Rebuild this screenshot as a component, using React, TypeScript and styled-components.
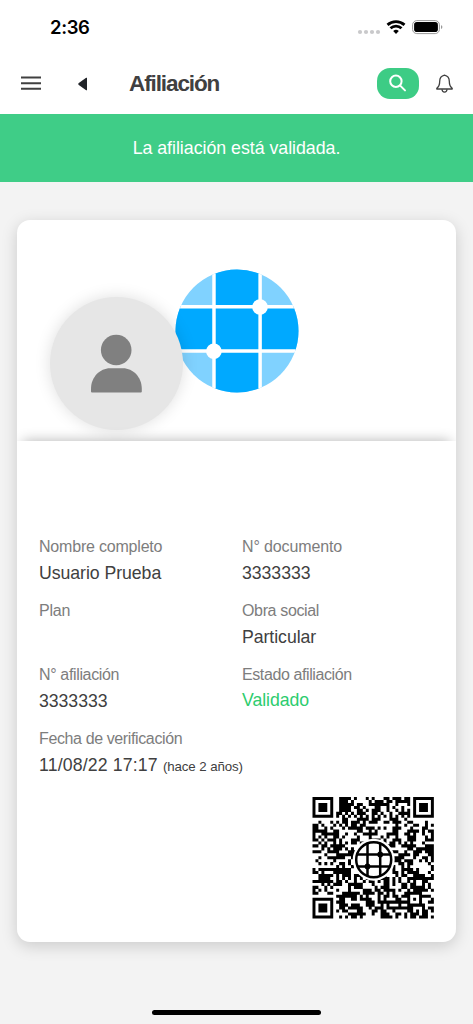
import React from 'react';
import styled, { createGlobalStyle } from 'styled-components';

const GlobalStyle = createGlobalStyle`
  * { box-sizing: border-box; }
  body {
    margin: 0;
    background: #f3f3f3;
    font-family: "Liberation Sans", Arial, sans-serif;
    color: #404040;
  }
`;

const Screen = styled.div`
  display: flex;
  flex-direction: column;
  width: 100%;
  height: 1024px;
  overflow: hidden;
  background: #f3f3f3;
`;

const StatusBar = styled.div`
  display: flex;
  align-items: center;
  justify-content: space-between;
  height: 54px;
  padding: 0 30px 0 50px;
  background: #fff;
`;

const Clock = styled.span`
  font: 600 18.5px/24px Inter, sans-serif;
  letter-spacing: -0.4px;
  color: #000;
`;

const StatusIcons = styled.svg`
  display: block;
  width: 86px;
  height: 20px;
`;

const TopBar = styled.header`
  display: flex;
  align-items: center;
  height: 60px;
  padding: 0 20.5px 0 21px;
  background: #fff;
`;

const MenuIcon = styled.svg`
  width: 20px;
  height: 16px;
  margin-bottom: 2px;
`;

const BackIcon = styled.svg`
  width: 10px;
  height: 14px;
  margin: 0 0 1px 37px;
`;

const Title = styled.h1`
  flex: 1;
  margin: 0 0 0 41px;
  font-size: 22.5px;
  line-height: 28px;
  font-weight: 700;
  letter-spacing: -1.1px;
`;

const SearchButton = styled.button`
  display: flex;
  align-items: center;
  justify-content: center;
  width: 42px;
  height: 31px;
  margin: 0 16.5px 2px 0;
  padding: 0;
  border: 0;
  border-radius: 13px;
  background: #3dcc85;
`;

const BellIcon = styled.svg`
  width: 17px;
  height: 19px;
  margin-bottom: 1px;
`;

const Banner = styled.div`
  height: 67.5px;
  background: #3fcd87;
  color: #fff;
  font-size: 17.8px;
  line-height: 69px;
  letter-spacing: -0.03px;
  text-align: center;
`;

const Card = styled.main`
  width: 439px;
  height: 722px;
  margin: 38.5px 0 0 17px;
  border-radius: 13px;
  background: #fff;
  box-shadow: 0 4px 16px rgba(0, 0, 0, 0.17);
`;

const CardTop = styled.div`
  position: relative;
  display: flex;
  justify-content: center;
  height: 221px;
  padding-top: 48.5px;
  overflow: hidden;

  &::after {
    content: '';
    position: absolute;
    left: 0;
    right: 0;
    top: 221px;
    height: 40px;
    box-shadow: 0 -6px 13px -6px rgba(0, 0, 0, 0.3);
  }
`;

const Globe = styled.svg`
  width: 124px;
  height: 124px;
`;

const Avatar = styled.div`
  position: absolute;
  left: 33px;
  top: 77px;
  width: 133px;
  height: 133px;
  border-radius: 50%;
  background: #e6e6e6;
  box-shadow: 0 0 16px rgba(0, 0, 0, 0.13);

  svg {
    display: block;
    width: 133px;
    height: 133px;
  }
`;

const Details = styled.dl`
  display: grid;
  grid-template-columns: 203px 1fr;
  grid-auto-rows: 64px;
  margin: 0;
  padding: 92.6px 22px 0;
`;

const Field = styled.div<{ $wide?: boolean }>`
  grid-column: ${(p) => (p.$wide ? '1 / -1' : 'auto')};
`;

const Label = styled.dt<{ $spacing?: number }>`
  font-size: 16px;
  line-height: 26px;
  letter-spacing: ${(p) => p.$spacing ?? -0.2}px;
  color: #7d7d7d;
`;

const Value = styled.dd<{ $valid?: boolean; $spacing?: number }>`
  margin: 0;
  font-size: 17.7px;
  line-height: ${(p) => (p.$valid ? '24px' : '26px')};
  letter-spacing: ${(p) => p.$spacing ?? -0.05}px;
  color: ${(p) => (p.$valid ? '#2dcc6e' : '#404040')};

  small {
    font-size: 13.3px;
    letter-spacing: -0.1px;
  }
`;

const QrRow = styled.div`
  display: flex;
  justify-content: flex-end;
  padding: 7.4px 22px 0 0;
`;

const QrSvg = styled.svg`
  width: 122px;
  height: 122px;
`;

const HomeIndicator = styled.div`
  width: 169px;
  height: 5px;
  margin: auto auto 9px;
  border-radius: 3px;
  background: #000;
`;

const QR_SIZE = 41;

function finderCell(x: number, y: number): boolean | null {
  const corners = [[0, 0], [QR_SIZE - 7, 0], [0, QR_SIZE - 7]];
  for (const [cx, cy] of corners) {
    const d = Math.max(Math.abs(x - cx - 3), Math.abs(y - cy - 3));
    if (d <= 4) return d === 3 || d <= 1;
  }
  return null;
}

// Placeholder artwork: the data modules are a fixed pseudo-random pattern,
// so this code encodes nothing and cannot be scanned.
function isDark(x: number, y: number): boolean {
  const finder = finderCell(x, y);
  if (finder !== null) return finder;
  const align = Math.max(Math.abs(x - 34), Math.abs(y - 34));
  if (align <= 2) return align !== 1;
  if (x === 6 || y === 6) return (x + y) % 2 === 0;
  let h = (y * QR_SIZE + x + 1) * 0x9e3779b1;
  h |= 0;
  h = Math.imul(h ^ (h >>> 16), 0x85ebca6b);
  h = Math.imul(h ^ (h >>> 13), 0xc2b2ae35);
  return ((h ^ (h >>> 16)) & 255) < 134;
}

function QrCode() {
  let d = '';
  for (let y = 0; y < QR_SIZE; y++) {
    let x = 0;
    while (x < QR_SIZE) {
      if (!isDark(x, y)) {
        x++;
        continue;
      }
      const start = x;
      while (x < QR_SIZE && isDark(x, y)) x++;
      d += `M${start} ${y}H${x}v1.04H${start}z`;
    }
  }
  return (
    <QrSvg viewBox="0 0 122 122" aria-hidden="true">
      <path d={d} transform="translate(.5 0) scale(2.96)" fill="#000" />
      <circle cx="61.7" cy="62.7" r="21" fill="#fff" />
      <g fill="none" stroke="#000" strokeWidth="2.5">
        <circle cx="61.7" cy="62.7" r="17.5" />
        <path d="M55.5 46v33M68.2 46v33M45 57.5h33M45 69.5h33" />
      </g>
      <circle cx="68.2" cy="57.5" r="2.9" />
      <circle cx="55.5" cy="69.5" r="2.9" />
    </QrSvg>
  );
}

function Logo() {
  return (
    <Globe viewBox="0 0 125 125">
      <defs>
        <clipPath id="disc"><circle cx="62.5" cy="62.5" r="62" /></clipPath>
      </defs>
      <g clipPath="url(#disc)">
        <path d="M0 0h125v125H0z" fill="#80d2ff" />
        <path d="M40 0h45v125H40zM0 38h125v44H0z" fill="#00a9ff" />
        <path d="M39.3 0v125M85.8 0v125M0 38.1h125M0 82.6h125" stroke="#fff" strokeWidth="3.5" />
      </g>
      <circle cx="85.7" cy="38.3" r="7.9" fill="#fff" />
      <circle cx="39.2" cy="82.9" r="7.9" fill="#fff" />
    </Globe>
  );
}

export default function App() {
  return (
    <>
      <GlobalStyle />
      <Screen>
        <StatusBar>
          <Clock>2:36</Clock>
          <StatusIcons viewBox="0 0 86 20">
            <g fill="#c9c9cb">
              <circle cx="3" cy="15" r="2.1" />
              <circle cx="9" cy="15" r="2.1" />
              <circle cx="15" cy="15" r="2.1" />
              <circle cx="21" cy="15" r="2.1" />
            </g>
            <g fill="none" stroke="#000" strokeWidth="2.8">
              <path d="M30.5 7.9a12.5 12.5 0 0 1 17 0" />
              <path d="M33.5 11.3a8 8 0 0 1 11 0" />
            </g>
            <path d="M36.2 14a4.2 4.2 0 0 1 5.6 0L39 17z" />
            <rect x="55.6" y="3.6" width="26.8" height="13" rx="4.2" fill="none" stroke="#999" />
            <rect x="57.1" y="5.1" width="23.8" height="10" rx="2.8" />
            <path d="M84 8.3q1.4.3 1.4 1.8t-1.4 1.8z" fill="#999" />
          </StatusIcons>
        </StatusBar>
        <TopBar>
          <MenuIcon viewBox="0 0 20 16">
            <path d="M0 2.5h20M0 8.3h20M0 13.7h20" stroke="#404040" strokeWidth="1.9" />
          </MenuIcon>
          <BackIcon viewBox="0 0 10 14">
            <path d="M9 .8v12.4Q8.5 13.6 7.8 13L.8 8Q-.3 7 .8 6l7-5q.7-.6 1.2-.2z" fill="#212429" />
          </BackIcon>
          <Title>Afiliación</Title>
          <SearchButton aria-label="Buscar">
            <svg width="18" height="18" viewBox="0 0 18 18" fill="none" stroke="#fff" strokeWidth="2" strokeLinecap="round">
              <circle cx="6.9" cy="7.2" r="5.7" />
              <path d="M11.2 11.6L16 16.4" />
            </svg>
          </SearchButton>
          <BellIcon viewBox="0 0 17 19" fill="none" stroke="#404040" strokeWidth="1.3" strokeLinejoin="round">
            <path d="M8.5 1.2C5.2 2 3.7 4.2 3.7 7.2c0 3.4-.4 5.2-2.9 7v.8h15.4v-.8c-2.5-1.8-2.9-3.6-2.9-7 0-3-1.5-5.2-4.8-6z" />
            <path d="M6 15.2c.2 3.8 4.8 3.8 5 0" />
          </BellIcon>
        </TopBar>
        <Banner>La afiliación está validada.</Banner>
        <Card>
          <CardTop>
            <Logo />
            <Avatar>
              <svg viewBox="0 0 133 133" fill="#808080">
                <circle cx="66.2" cy="53" r="15.3" />
                <path d="M41 94.5V92C41 80 50 71.3 60 71.3h13C83 71.3 91.8 80 91.8 92v2.5q0 1-1 1H42q-1 0-1-1z" />
              </svg>
            </Avatar>
          </CardTop>
          <Details>
            <Field><Label>Nombre completo</Label><Value>Usuario Prueba</Value></Field>
            <Field><Label $spacing={-0.12}>N° documento</Label><Value>3333333</Value></Field>
            <Field><Label>Plan</Label><Value /></Field>
            <Field><Label $spacing={-0.35}>Obra social</Label><Value>Particular</Value></Field>
            <Field><Label $spacing={-0.35}>N° afiliación</Label><Value>3333333</Value></Field>
            <Field><Label $spacing={-0.4}>Estado afiliación</Label><Value $valid>Validado</Value></Field>
            <Field $wide>
              <Label $spacing={-0.38}>Fecha de verificación</Label>
              <Value $spacing={0.15}>11/08/22 17:17 <small>(hace 2 años)</small></Value>
            </Field>
          </Details>
          <QrRow><QrCode /></QrRow>
        </Card>
        <HomeIndicator />
      </Screen>
    </>
  );
}
